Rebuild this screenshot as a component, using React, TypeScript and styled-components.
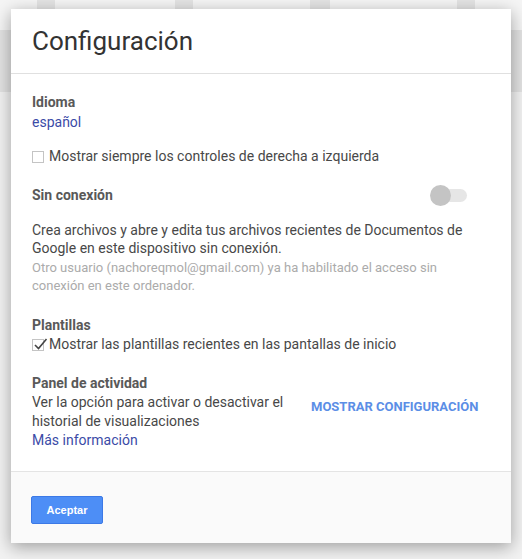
import styled, { createGlobalStyle } from "styled-components";

const GlobalStyle = createGlobalStyle`
  html, body {
    margin: 0;
    padding: 0;
    background: #f1f1f1;
    font-family: Roboto, "Liberation Sans", Arial, sans-serif;
  }
  * { box-sizing: border-box; }
`;

const Backdrop = styled.div`
  position: relative;
  width: 522px;
  height: 559px;
  overflow: hidden;
  background: #f2f2f2;
`;

const TabStrip = styled.div`
  display: flex;
  height: 30px;
  background: #f3f3f3;
`;

const Tab = styled.div<{ $w: number; $dark?: boolean }>`
  width: ${(p) => p.$w}px;
  background: ${(p) => (p.$dark ? "#e4e4e4" : "#f5f5f5")};
`;

const Band = styled.div`
  height: 62px;
  background: #e2e2e2;
`;

const Dialog = styled.div`
  position: absolute;
  top: 9px;
  left: 11px;
  width: 500px;
  height: 534px;
  background: #fff;
  display: flex;
  flex-direction: column;
  box-shadow: 0 4px 16px rgba(0, 0, 0, 0.35);
`;

const Header = styled.div`
  height: 65px;
  padding: 14px 21px 0;
  border-bottom: 1px solid #e0e0e0;
`;

const Title = styled.h1`
  margin: 0;
  font-size: 26px;
  font-weight: 400;
  line-height: 36px;
  color: #333;
`;

const Body = styled.div`
  flex: 1;
  padding: 18px 21px 20px;
  color: #484848;
  font-size: 14px;
  line-height: 20px;
`;

const Label = styled.div`
  font-weight: 700;
  color: #595959;
`;

const Link = styled.a`
  color: #3b4ba7;
  text-decoration: none;
`;

const Section = styled.div<{ $gap: number }>`
  margin-top: ${(p) => p.$gap}px;
`;

// the checkbox rows sit a pixel higher than the line box
const CheckRow = styled.label`
  display: flex;
  align-items: center;
  gap: 5px;
  margin-top: -1px;
`;

const Box = styled.span`
  position: relative;
  width: 12px;
  height: 12px;
  border: 1px solid #c4c4c4;
  flex: none;
  margin-top: 2px;
`;

const Tick = styled.svg`
  position: absolute;
  left: 0px;
  top: -4px;
`;

const HeadRow = styled.div`
  display: flex;
  justify-content: space-between;
  align-items: center;
`;

const Toggle = styled.div`
  position: relative;
  width: 36px;
  height: 13px;
  margin-right: 23px;
  border-radius: 7px;
  background: #e6e6e6;
`;

const Thumb = styled.span`
  position: absolute;
  left: -1px;
  top: -4px;
  width: 21px;
  height: 21px;
  border-radius: 50%;
  background: #c4c4c4;
`;

const Para = styled.p`
  margin: 16px 0 0;
  line-height: 18px;
`;

const Note = styled.p`
  margin: 2px 0 0;
  font-size: 13px;
  line-height: 18px;
  color: #ababab;
`;

const ActivityRow = styled.div`
  display: flex;
  align-items: flex-start;
  line-height: 19px;
`;

const ActivityText = styled.div`
  width: 279px;
`;

const TextButton = styled.button`
  margin-top: 4px;
  padding: 0;
  border: none;
  background: none;
  font-family: Roboto, "Liberation Sans", Arial, sans-serif;
  font-size: 13px;
  font-weight: 700;
  line-height: 19px;
  color: #5b8ee6;
`;

const Footer = styled.div`
  height: 72px;
  padding: 24px 20px 20px;
  background: #fafafa;
  border-top: 1px solid #e4e4e4;
`;

const PrimaryButton = styled.button`
  width: 72px;
  height: 28px;
  border: 1px solid #3c79e6;
  border-radius: 2px;
  background: #4d8ef6;
  color: #fff;
  font-family: "Liberation Sans", Arial, sans-serif;
  font-size: 11px;
  font-weight: 700;
`;

function Checkbox({ checked }: { checked?: boolean }) {
  return (
    <Box>
      {checked && (
        <Tick width="15" height="15" viewBox="0 0 15 15">
          <path d="M2 9 L5.5 12.5 L13.5 3" fill="none" stroke="#444" strokeWidth="1.6" />
        </Tick>
      )}
    </Box>
  );
}

export default function App() {
  return (
    <>
      <GlobalStyle />
      <Backdrop>
        <TabStrip>
          <Tab $w={37} />
          <Tab $w={18} $dark />
          <Tab $w={120} />
          <Tab $w={18} $dark />
          <Tab $w={117} />
          <Tab $w={20} $dark />
          <Tab $w={127} />
          <Tab $w={18} $dark />
          <Tab $w={47} />
        </TabStrip>
        <Band />
        <Dialog>
          <Header>
            <Title>Configuración</Title>
          </Header>
          <Body>
            <Label>Idioma</Label>
            <Link href="#">español</Link>
            <Section $gap={15}>
              <CheckRow>
                <Checkbox />
                Mostrar siempre los controles de derecha a izquierda
              </CheckRow>
            </Section>
            <Section $gap={19}>
              <HeadRow>
                <Label>Sin conexión</Label>
                <Toggle>
                  <Thumb />
                </Toggle>
              </HeadRow>
              <Para>
                Crea archivos y abre y edita tus archivos recientes de Documentos de
                Google en este dispositivo sin conexión.
              </Para>
              <Note>
                Otro usuario (nachoreqmol@gmail.com) ya ha habilitado el acceso sin
                conexión en este ordenador.
              </Note>
            </Section>
            <Section $gap={20}>
              <Label>Plantillas</Label>
              <CheckRow>
                <Checkbox checked />
                Mostrar las plantillas recientes en las pantallas de inicio
              </CheckRow>
            </Section>
            <Section $gap={19}>
              <Label>Panel de actividad</Label>
              <ActivityRow>
                <ActivityText>
                  Ver la opción para activar o desactivar el historial de
                  visualizaciones
                  <br />
                  <Link href="#">Más información</Link>
                </ActivityText>
                <TextButton>MOSTRAR CONFIGURACIÓN</TextButton>
              </ActivityRow>
            </Section>
          </Body>
          <Footer>
            <PrimaryButton>Aceptar</PrimaryButton>
          </Footer>
        </Dialog>
      </Backdrop>
    </>
  );
}
